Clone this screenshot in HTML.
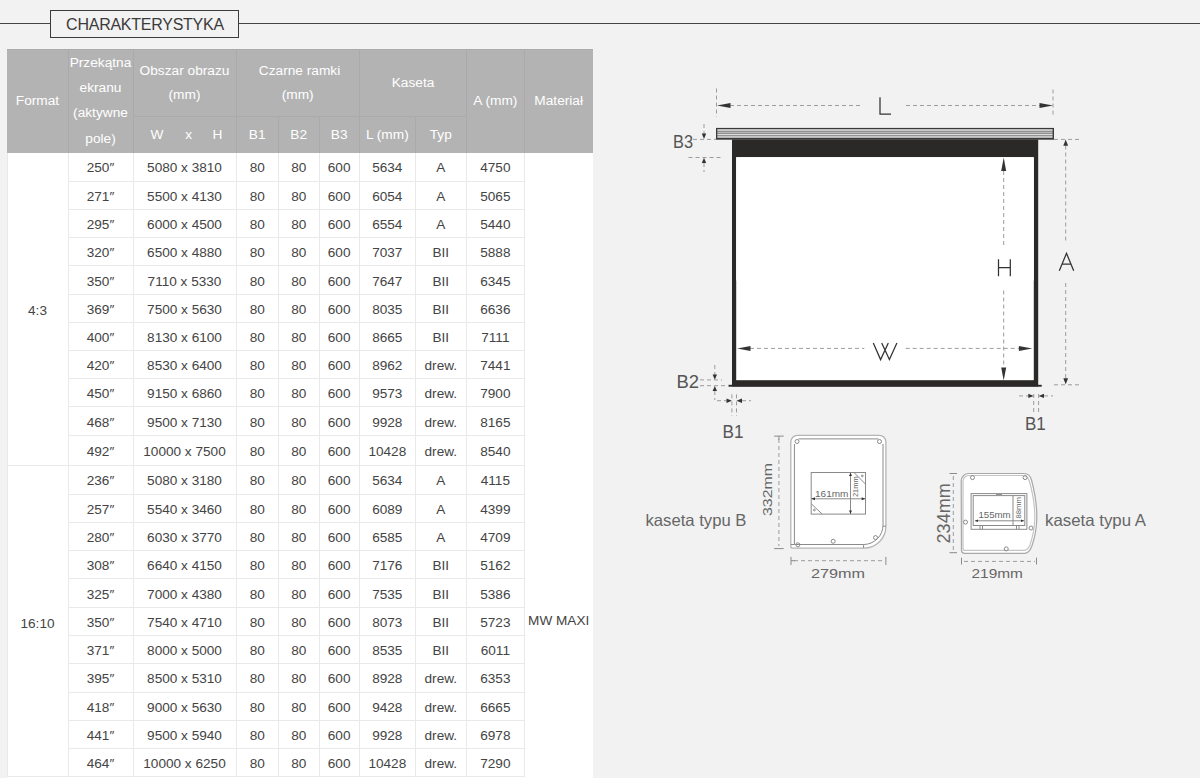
<!DOCTYPE html>
<html><head><meta charset="utf-8">
<style>
html,body{margin:0;padding:0;}
body{width:1200px;height:778px;background:#f2f2f2;position:relative;overflow:hidden;font-family:"Liberation Sans",sans-serif;}
.t,.ht{position:absolute;width:200px;text-align:center;white-space:nowrap;line-height:0;height:0;}
.t{font-size:13.6px;color:#444;}
.ht{font-size:13.7px;color:#fff;}
.t span,.ht span{}
.hl{position:absolute;height:1px;background:#e9e9e9;}
.vl{position:absolute;width:1px;background:#e9e9e9;}
.hvl{position:absolute;width:1px;background:#aaaaaa;}
.hhl{position:absolute;height:1px;background:#aaaaaa;}
#title{position:absolute;left:50px;top:10px;width:186.5px;height:25.5px;border:1.5px solid #3c3c3c;}
#tline{position:absolute;left:0;top:22.5px;width:1200px;height:1.3px;background:#444;}
#tt{position:absolute;left:50.5px;top:25px;width:189px;text-align:center;font-size:16px;color:#3b3b3b;line-height:0;letter-spacing:-0.25px;}
#thead{position:absolute;left:7px;top:49px;width:586px;height:103.5px;background:#b3b3b3;border-top:1px solid #ababab;box-sizing:border-box;}
#tbody{position:absolute;left:7px;top:152.5px;width:586px;height:625px;background:#fff;}
svg{position:absolute;left:0;top:0;}
</style></head><body>
<div id="tline"></div>
<div id="title" style="background:#f2f2f2"></div>
<div id="tt">CHARAKTERYSTYKA</div>
<div id="thead"></div>
<div id="tbody"></div>
<div class="hl" style="top:180.80px;left:68px;width:456.4px"></div>
<div class="hl" style="top:209.00px;left:68px;width:456.4px"></div>
<div class="hl" style="top:237.20px;left:68px;width:456.4px"></div>
<div class="hl" style="top:265.40px;left:68px;width:456.4px"></div>
<div class="hl" style="top:293.60px;left:68px;width:456.4px"></div>
<div class="hl" style="top:321.80px;left:68px;width:456.4px"></div>
<div class="hl" style="top:350.00px;left:68px;width:456.4px"></div>
<div class="hl" style="top:378.20px;left:68px;width:456.4px"></div>
<div class="hl" style="top:406.40px;left:68px;width:456.4px"></div>
<div class="hl" style="top:434.60px;left:68px;width:456.4px"></div>
<div class="hl" style="top:465.30px;left:7px;width:517.4px"></div>
<div class="hl" style="top:493.58px;left:68px;width:456.4px"></div>
<div class="hl" style="top:521.86px;left:68px;width:456.4px"></div>
<div class="hl" style="top:550.14px;left:68px;width:456.4px"></div>
<div class="hl" style="top:578.42px;left:68px;width:456.4px"></div>
<div class="hl" style="top:606.70px;left:68px;width:456.4px"></div>
<div class="hl" style="top:634.98px;left:68px;width:456.4px"></div>
<div class="hl" style="top:663.26px;left:68px;width:456.4px"></div>
<div class="hl" style="top:691.54px;left:68px;width:456.4px"></div>
<div class="hl" style="top:719.82px;left:68px;width:456.4px"></div>
<div class="hl" style="top:748.10px;left:68px;width:456.4px"></div>
<div class="hl" style="top:776.38px;left:7px;width:517.4px"></div>
<div class="vl" style="left:67.50px;top:152.5px;height:624.88px"></div>
<div class="vl" style="left:132.50px;top:152.5px;height:624.88px"></div>
<div class="vl" style="left:235.50px;top:152.5px;height:624.88px"></div>
<div class="vl" style="left:277.90px;top:152.5px;height:624.88px"></div>
<div class="vl" style="left:318.50px;top:152.5px;height:624.88px"></div>
<div class="vl" style="left:358.80px;top:152.5px;height:624.88px"></div>
<div class="vl" style="left:414.80px;top:152.5px;height:624.88px"></div>
<div class="vl" style="left:465.80px;top:152.5px;height:624.88px"></div>
<div class="vl" style="left:523.90px;top:152.5px;height:624.88px"></div>
<div class="vl" style="left:6.5px;top:152.5px;height:624.9px"></div>
<div class="hvl" style="left:67.50px;top:49px;height:103.5px"></div>
<div class="hvl" style="left:132.50px;top:49px;height:103.5px"></div>
<div class="hvl" style="left:235.50px;top:49px;height:103.5px"></div>
<div class="hvl" style="left:358.80px;top:49px;height:103.5px"></div>
<div class="hvl" style="left:465.80px;top:49px;height:103.5px"></div>
<div class="hvl" style="left:523.90px;top:49px;height:103.5px"></div>
<div class="hvl" style="left:277.90px;top:116px;height:36.5px"></div>
<div class="hvl" style="left:318.50px;top:116px;height:36.5px"></div>
<div class="hvl" style="left:414.80px;top:116px;height:36.5px"></div>
<div class="hhl" style="left:133px;top:115.5px;width:333.3px"></div>
<div class="ht" style="left:-62.50px;top:100.50px">Format</div>
<div class="ht" style="left:0.50px;top:62.50px">Przekątna</div>
<div class="ht" style="left:0.50px;top:87.90px">ekranu</div>
<div class="ht" style="left:0.50px;top:113.30px">(aktywne</div>
<div class="ht" style="left:0.50px;top:138.70px">pole)</div>
<div class="ht" style="left:84.50px;top:70.70px">Obszar obrazu</div>
<div class="ht" style="left:84.50px;top:95.20px">(mm)</div>
<div class="ht" style="left:57.00px;top:135.30px">W</div>
<div class="ht" style="left:88.70px;top:135.30px">x</div>
<div class="ht" style="left:117.50px;top:135.30px">H</div>
<div class="ht" style="left:199.50px;top:70.70px">Czarne ramki</div>
<div class="ht" style="left:197.70px;top:95.20px">(mm)</div>
<div class="ht" style="left:157.20px;top:135.30px">B1</div>
<div class="ht" style="left:198.70px;top:135.30px">B2</div>
<div class="ht" style="left:239.20px;top:135.30px">B3</div>
<div class="ht" style="left:313.00px;top:83.00px">Kaseta</div>
<div class="ht" style="left:287.30px;top:135.30px">L (mm)</div>
<div class="ht" style="left:340.80px;top:135.30px">Typ</div>
<div class="ht" style="left:395.35px;top:101.00px">A (mm)</div>
<div class="ht" style="left:458.70px;top:101.00px">Materiał</div>
<div class="t" style="left:0.50px;top:168.40px">250&#8243;</div>
<div class="t" style="left:84.50px;top:168.40px">5080 x 3810</div>
<div class="t" style="left:157.20px;top:168.40px">80</div>
<div class="t" style="left:198.70px;top:168.40px">80</div>
<div class="t" style="left:239.15px;top:168.40px">600</div>
<div class="t" style="left:287.30px;top:168.40px">5634</div>
<div class="t" style="left:340.80px;top:168.40px">A</div>
<div class="t" style="left:395.35px;top:168.40px">4750</div>
<div class="t" style="left:0.50px;top:196.90px">271&#8243;</div>
<div class="t" style="left:84.50px;top:196.90px">5500 x 4130</div>
<div class="t" style="left:157.20px;top:196.90px">80</div>
<div class="t" style="left:198.70px;top:196.90px">80</div>
<div class="t" style="left:239.15px;top:196.90px">600</div>
<div class="t" style="left:287.30px;top:196.90px">6054</div>
<div class="t" style="left:340.80px;top:196.90px">A</div>
<div class="t" style="left:395.35px;top:196.90px">5065</div>
<div class="t" style="left:0.50px;top:225.10px">295&#8243;</div>
<div class="t" style="left:84.50px;top:225.10px">6000 x 4500</div>
<div class="t" style="left:157.20px;top:225.10px">80</div>
<div class="t" style="left:198.70px;top:225.10px">80</div>
<div class="t" style="left:239.15px;top:225.10px">600</div>
<div class="t" style="left:287.30px;top:225.10px">6554</div>
<div class="t" style="left:340.80px;top:225.10px">A</div>
<div class="t" style="left:395.35px;top:225.10px">5440</div>
<div class="t" style="left:0.50px;top:253.30px">320&#8243;</div>
<div class="t" style="left:84.50px;top:253.30px">6500 x 4880</div>
<div class="t" style="left:157.20px;top:253.30px">80</div>
<div class="t" style="left:198.70px;top:253.30px">80</div>
<div class="t" style="left:239.15px;top:253.30px">600</div>
<div class="t" style="left:287.30px;top:253.30px">7037</div>
<div class="t" style="left:340.80px;top:253.30px">BII</div>
<div class="t" style="left:395.35px;top:253.30px">5888</div>
<div class="t" style="left:0.50px;top:281.50px">350&#8243;</div>
<div class="t" style="left:84.50px;top:281.50px">7110 x 5330</div>
<div class="t" style="left:157.20px;top:281.50px">80</div>
<div class="t" style="left:198.70px;top:281.50px">80</div>
<div class="t" style="left:239.15px;top:281.50px">600</div>
<div class="t" style="left:287.30px;top:281.50px">7647</div>
<div class="t" style="left:340.80px;top:281.50px">BII</div>
<div class="t" style="left:395.35px;top:281.50px">6345</div>
<div class="t" style="left:0.50px;top:309.70px">369&#8243;</div>
<div class="t" style="left:84.50px;top:309.70px">7500 x 5630</div>
<div class="t" style="left:157.20px;top:309.70px">80</div>
<div class="t" style="left:198.70px;top:309.70px">80</div>
<div class="t" style="left:239.15px;top:309.70px">600</div>
<div class="t" style="left:287.30px;top:309.70px">8035</div>
<div class="t" style="left:340.80px;top:309.70px">BII</div>
<div class="t" style="left:395.35px;top:309.70px">6636</div>
<div class="t" style="left:0.50px;top:337.90px">400&#8243;</div>
<div class="t" style="left:84.50px;top:337.90px">8130 x 6100</div>
<div class="t" style="left:157.20px;top:337.90px">80</div>
<div class="t" style="left:198.70px;top:337.90px">80</div>
<div class="t" style="left:239.15px;top:337.90px">600</div>
<div class="t" style="left:287.30px;top:337.90px">8665</div>
<div class="t" style="left:340.80px;top:337.90px">BII</div>
<div class="t" style="left:395.35px;top:337.90px">7111</div>
<div class="t" style="left:0.50px;top:366.10px">420&#8243;</div>
<div class="t" style="left:84.50px;top:366.10px">8530 x 6400</div>
<div class="t" style="left:157.20px;top:366.10px">80</div>
<div class="t" style="left:198.70px;top:366.10px">80</div>
<div class="t" style="left:239.15px;top:366.10px">600</div>
<div class="t" style="left:287.30px;top:366.10px">8962</div>
<div class="t" style="left:340.80px;top:366.10px">drew.</div>
<div class="t" style="left:395.35px;top:366.10px">7441</div>
<div class="t" style="left:0.50px;top:394.30px">450&#8243;</div>
<div class="t" style="left:84.50px;top:394.30px">9150 x 6860</div>
<div class="t" style="left:157.20px;top:394.30px">80</div>
<div class="t" style="left:198.70px;top:394.30px">80</div>
<div class="t" style="left:239.15px;top:394.30px">600</div>
<div class="t" style="left:287.30px;top:394.30px">9573</div>
<div class="t" style="left:340.80px;top:394.30px">drew.</div>
<div class="t" style="left:395.35px;top:394.30px">7900</div>
<div class="t" style="left:0.50px;top:422.50px">468&#8243;</div>
<div class="t" style="left:84.50px;top:422.50px">9500 x 7130</div>
<div class="t" style="left:157.20px;top:422.50px">80</div>
<div class="t" style="left:198.70px;top:422.50px">80</div>
<div class="t" style="left:239.15px;top:422.50px">600</div>
<div class="t" style="left:287.30px;top:422.50px">9928</div>
<div class="t" style="left:340.80px;top:422.50px">drew.</div>
<div class="t" style="left:395.35px;top:422.50px">8165</div>
<div class="t" style="left:0.50px;top:451.95px">492&#8243;</div>
<div class="t" style="left:84.50px;top:451.95px">10000 x 7500</div>
<div class="t" style="left:157.20px;top:451.95px">80</div>
<div class="t" style="left:198.70px;top:451.95px">80</div>
<div class="t" style="left:239.15px;top:451.95px">600</div>
<div class="t" style="left:287.30px;top:451.95px">10428</div>
<div class="t" style="left:340.80px;top:451.95px">drew.</div>
<div class="t" style="left:395.35px;top:451.95px">8540</div>
<div class="t" style="left:0.50px;top:481.44px">236&#8243;</div>
<div class="t" style="left:84.50px;top:481.44px">5080 x 3180</div>
<div class="t" style="left:157.20px;top:481.44px">80</div>
<div class="t" style="left:198.70px;top:481.44px">80</div>
<div class="t" style="left:239.15px;top:481.44px">600</div>
<div class="t" style="left:287.30px;top:481.44px">5634</div>
<div class="t" style="left:340.80px;top:481.44px">A</div>
<div class="t" style="left:395.35px;top:481.44px">4115</div>
<div class="t" style="left:0.50px;top:509.72px">257&#8243;</div>
<div class="t" style="left:84.50px;top:509.72px">5540 x 3460</div>
<div class="t" style="left:157.20px;top:509.72px">80</div>
<div class="t" style="left:198.70px;top:509.72px">80</div>
<div class="t" style="left:239.15px;top:509.72px">600</div>
<div class="t" style="left:287.30px;top:509.72px">6089</div>
<div class="t" style="left:340.80px;top:509.72px">A</div>
<div class="t" style="left:395.35px;top:509.72px">4399</div>
<div class="t" style="left:0.50px;top:538.00px">280&#8243;</div>
<div class="t" style="left:84.50px;top:538.00px">6030 x 3770</div>
<div class="t" style="left:157.20px;top:538.00px">80</div>
<div class="t" style="left:198.70px;top:538.00px">80</div>
<div class="t" style="left:239.15px;top:538.00px">600</div>
<div class="t" style="left:287.30px;top:538.00px">6585</div>
<div class="t" style="left:340.80px;top:538.00px">A</div>
<div class="t" style="left:395.35px;top:538.00px">4709</div>
<div class="t" style="left:0.50px;top:566.28px">308&#8243;</div>
<div class="t" style="left:84.50px;top:566.28px">6640 x 4150</div>
<div class="t" style="left:157.20px;top:566.28px">80</div>
<div class="t" style="left:198.70px;top:566.28px">80</div>
<div class="t" style="left:239.15px;top:566.28px">600</div>
<div class="t" style="left:287.30px;top:566.28px">7176</div>
<div class="t" style="left:340.80px;top:566.28px">BII</div>
<div class="t" style="left:395.35px;top:566.28px">5162</div>
<div class="t" style="left:0.50px;top:594.56px">325&#8243;</div>
<div class="t" style="left:84.50px;top:594.56px">7000 x 4380</div>
<div class="t" style="left:157.20px;top:594.56px">80</div>
<div class="t" style="left:198.70px;top:594.56px">80</div>
<div class="t" style="left:239.15px;top:594.56px">600</div>
<div class="t" style="left:287.30px;top:594.56px">7535</div>
<div class="t" style="left:340.80px;top:594.56px">BII</div>
<div class="t" style="left:395.35px;top:594.56px">5386</div>
<div class="t" style="left:0.50px;top:622.84px">350&#8243;</div>
<div class="t" style="left:84.50px;top:622.84px">7540 x 4710</div>
<div class="t" style="left:157.20px;top:622.84px">80</div>
<div class="t" style="left:198.70px;top:622.84px">80</div>
<div class="t" style="left:239.15px;top:622.84px">600</div>
<div class="t" style="left:287.30px;top:622.84px">8073</div>
<div class="t" style="left:340.80px;top:622.84px">BII</div>
<div class="t" style="left:395.35px;top:622.84px">5723</div>
<div class="t" style="left:0.50px;top:651.12px">371&#8243;</div>
<div class="t" style="left:84.50px;top:651.12px">8000 x 5000</div>
<div class="t" style="left:157.20px;top:651.12px">80</div>
<div class="t" style="left:198.70px;top:651.12px">80</div>
<div class="t" style="left:239.15px;top:651.12px">600</div>
<div class="t" style="left:287.30px;top:651.12px">8535</div>
<div class="t" style="left:340.80px;top:651.12px">BII</div>
<div class="t" style="left:395.35px;top:651.12px">6011</div>
<div class="t" style="left:0.50px;top:679.40px">395&#8243;</div>
<div class="t" style="left:84.50px;top:679.40px">8500 x 5310</div>
<div class="t" style="left:157.20px;top:679.40px">80</div>
<div class="t" style="left:198.70px;top:679.40px">80</div>
<div class="t" style="left:239.15px;top:679.40px">600</div>
<div class="t" style="left:287.30px;top:679.40px">8928</div>
<div class="t" style="left:340.80px;top:679.40px">drew.</div>
<div class="t" style="left:395.35px;top:679.40px">6353</div>
<div class="t" style="left:0.50px;top:707.68px">418&#8243;</div>
<div class="t" style="left:84.50px;top:707.68px">9000 x 5630</div>
<div class="t" style="left:157.20px;top:707.68px">80</div>
<div class="t" style="left:198.70px;top:707.68px">80</div>
<div class="t" style="left:239.15px;top:707.68px">600</div>
<div class="t" style="left:287.30px;top:707.68px">9428</div>
<div class="t" style="left:340.80px;top:707.68px">drew.</div>
<div class="t" style="left:395.35px;top:707.68px">6665</div>
<div class="t" style="left:0.50px;top:735.96px">441&#8243;</div>
<div class="t" style="left:84.50px;top:735.96px">9500 x 5940</div>
<div class="t" style="left:157.20px;top:735.96px">80</div>
<div class="t" style="left:198.70px;top:735.96px">80</div>
<div class="t" style="left:239.15px;top:735.96px">600</div>
<div class="t" style="left:287.30px;top:735.96px">9928</div>
<div class="t" style="left:340.80px;top:735.96px">drew.</div>
<div class="t" style="left:395.35px;top:735.96px">6978</div>
<div class="t" style="left:0.50px;top:764.24px">464&#8243;</div>
<div class="t" style="left:84.50px;top:764.24px">10000 x 6250</div>
<div class="t" style="left:157.20px;top:764.24px">80</div>
<div class="t" style="left:198.70px;top:764.24px">80</div>
<div class="t" style="left:239.15px;top:764.24px">600</div>
<div class="t" style="left:287.30px;top:764.24px">10428</div>
<div class="t" style="left:340.80px;top:764.24px">drew.</div>
<div class="t" style="left:395.35px;top:764.24px">7290</div>
<div class="t" style="left:-62.5px;top:311.2px">4:3</div>
<div class="t" style="left:-62.5px;top:623.6px">16:10</div>
<div class="t" style="left:458.7px;top:621px">MW MAXI</div>
<svg width="1200" height="778" viewBox="0 0 1200 778">
<defs>
<style>
.d{stroke:#9c9c9c;stroke-width:1;stroke-dasharray:4 3;fill:none}
.ar{fill:#333}
.lt{stroke:#333;stroke-width:1.25;fill:none;stroke-linecap:butt}
.bl{font-family:"Liberation Sans",sans-serif;fill:#555}
.cs{stroke:#8a8a8a;stroke-width:1;fill:none}
.ct{font-family:"Liberation Sans",sans-serif;fill:#666}
</style>
</defs>
<!-- L dimension -->
<line class="d" x1="716.5" y1="88.5" x2="716.5" y2="117"/>
<line class="d" x1="1053" y1="89.5" x2="1053" y2="116"/>
<line class="d" x1="730" y1="105.5" x2="862" y2="105.5"/>
<line class="d" x1="906" y1="105.5" x2="1040" y2="105.5"/>
<polygon class="ar" points="717,105.5 730.5,103 730.5,108"/>
<polygon class="ar" points="1053,105.5 1039.5,103 1039.5,108"/>
<path class="lt" d="M880,97.3 V114 H891"/>
<!-- casing -->
<rect x="716" y="127.9" width="338" height="11.8" fill="#3a3a3a"/>
<rect x="717.3" y="129.1" width="335.3" height="1.9" fill="#cacaca"/>
<rect x="717.3" y="131" width="335.3" height="0.8" fill="#9a9a9a"/>
<rect x="717.3" y="131.8" width="335.3" height="1.2" fill="#b8b8b8"/>
<rect x="717.3" y="133" width="335.3" height="0.8" fill="#8c8c8c"/>
<rect x="717.3" y="133.8" width="335.3" height="1.2" fill="#dedede"/>
<rect x="717.3" y="135" width="335.3" height="0.8" fill="#9a9a9a"/>
<rect x="717.3" y="135.8" width="335.3" height="2.1" fill="#c6c6c6"/>
<!-- frame -->
<rect x="732" y="139.5" width="306.2" height="247" fill="#2b2828"/>
<rect x="736.2" y="157.2" width="297.6" height="123.3" fill="#fff"/>
<rect x="736.2" y="157.2" width="297.6" height="223" fill="#fff"/>
<rect x="728.5" y="384.8" width="313.2" height="1.9" fill="#2b2828"/>
<!-- B3 -->
<line class="d" x1="693" y1="139.4" x2="716" y2="139.4"/>
<line class="d" x1="688.5" y1="157.5" x2="722" y2="157.5"/>
<line class="d" x1="704" y1="124" x2="704" y2="134"/>
<polygon class="ar" points="704,139 701.8,133.5 706.2,133.5"/>
<polygon class="ar" points="704,157.8 701.8,163 706.2,163"/>
<line class="d" x1="704" y1="163" x2="704" y2="172"/>
<text class="bl" x="673" y="148" font-size="17.5" textLength="20" lengthAdjust="spacingAndGlyphs">B3</text>
<!-- B2 -->
<line class="d" x1="700" y1="379.9" x2="722" y2="379.9"/>
<line class="d" x1="700" y1="385.7" x2="728.5" y2="385.7"/>
<line class="d" x1="714.8" y1="365" x2="714.8" y2="375"/>
<polygon class="ar" points="714.8,379.7 712.6,374.5 717,374.5"/>
<polygon class="ar" points="714.8,386 712.6,391 717,391"/>
<line class="d" x1="714.8" y1="391" x2="714.8" y2="400"/>
<text class="bl" x="676.5" y="388.3" font-size="19" textLength="22.6" lengthAdjust="spacingAndGlyphs">B2</text>
<!-- B1 left -->
<line class="d" x1="731.9" y1="394.4" x2="731.9" y2="416"/>
<line class="d" x1="736.5" y1="394.4" x2="736.5" y2="416"/>
<line class="d" x1="717" y1="400.7" x2="726.5" y2="400.7"/>
<line class="d" x1="742" y1="400.7" x2="751" y2="400.7"/>
<polygon class="ar" points="731.9,400.7 726.5,398.5 726.5,402.9"/>
<polygon class="ar" points="736.5,400.7 742,398.5 742,402.9"/>
<text class="bl" x="722.5" y="437.8" font-size="19" textLength="21" lengthAdjust="spacingAndGlyphs">B1</text>
<!-- B1 right -->
<line class="d" x1="1033.7" y1="394" x2="1033.7" y2="413"/>
<line class="d" x1="1038.6" y1="394" x2="1038.6" y2="413"/>
<line class="d" x1="1019" y1="395.9" x2="1028.5" y2="395.9"/>
<line class="d" x1="1044" y1="395.9" x2="1053" y2="395.9"/>
<polygon class="ar" points="1033.7,395.9 1028.3,393.7 1028.3,398.1"/>
<polygon class="ar" points="1038.6,395.9 1044,393.7 1044,398.1"/>
<text class="bl" x="1025" y="430.3" font-size="19" textLength="20.8" lengthAdjust="spacingAndGlyphs">B1</text>
<!-- H -->
<line class="d" x1="1003.7" y1="171" x2="1003.7" y2="246"/>
<line class="d" x1="1003.7" y1="290.5" x2="1003.7" y2="367.5"/>
<polygon class="ar" points="1003.7,157.5 1001.2,171 1006.2,171"/>
<polygon class="ar" points="1003.7,380.5 1001.2,367.5 1006.2,367.5"/>
<path class="lt" d="M998.5,259.2 V276.3 M1010.3,259.2 V276.3 M998.5,267.5 H1010.3"/>
<!-- A -->
<line class="d" x1="1054" y1="139.4" x2="1080" y2="139.4"/>
<line class="d" x1="1054" y1="384.8" x2="1080" y2="384.8"/>
<line class="d" x1="1065.7" y1="145.5" x2="1065.7" y2="241"/>
<line class="d" x1="1065.7" y1="283" x2="1065.7" y2="378.5"/>
<polygon class="ar" points="1065.7,139.6 1063.3,145.8 1068.1,145.8"/>
<polygon class="ar" points="1065.7,384.3 1063.3,378.2 1068.1,378.2"/>
<path class="lt" d="M1059.3,270.8 L1066.5,253.3 L1073.7,270.8 M1061.9,264.2 H1071.1"/>
<!-- W -->
<line class="d" x1="750" y1="348.4" x2="864.3" y2="348.4"/>
<line class="d" x1="905.7" y1="348.4" x2="1019" y2="348.4"/>
<polygon class="ar" points="737.2,348.4 750.5,345.9 750.5,350.9"/>
<polygon class="ar" points="1032.2,348.4 1018.9,345.9 1018.9,350.9"/>
<path class="lt" d="M873.3,342.9 L880.6,359.6 L888.3,342.9 M881.7,342.9 L889.4,359.6 L896.9,342.9"/>
<!-- cassette B -->
<path class="cs" style="fill:#fff;stroke:#b5b5b5;stroke-width:1.3" d="M790.8,442 A6.7,6.7 0 0 1 797.5,435.3 H879.4 A6.5,6.5 0 0 1 885.9,441.8 V526.2 A22,22 0 0 1 863.9,548.2 H792.8 A2,2 0 0 1 790.8,546.2 Z"/>
<path class="cs" d="M790.8,544.5 H794.4 V444 M794.4,544.5 H863.6 A19.4,19.4 0 0 0 883,525.1 V444 M798.5,438.9 H878.5 M883,526.2 H885.9 M863.6,544.5 V548.2"/>
<circle class="cs" cx="797" cy="441.5" r="2"/>
<circle class="cs" cx="879.5" cy="441.5" r="2"/>
<circle class="cs" cx="797.9" cy="544.8" r="2"/>
<circle class="cs" cx="833.2" cy="541.3" r="2"/>
<circle class="cs" cx="875.5" cy="537.6" r="2"/>
<rect class="cs" x="811.2" y="472.5" width="54.3" height="41.6"/>
<path class="cs" d="M811.2,498.8 H865.5 M850.5,472.5 V514.1 M854,472.5 L865.5,484.1 M811.2,503.7 L822.2,514.1"/>
<polygon class="ar" points="811.5,498.8 815,497.3 815,500.3"/>
<polygon class="ar" points="865.2,498.8 861.7,497.3 861.7,500.3"/>
<polygon class="ar" points="850.5,472.8 849,476 852,476"/>
<polygon class="ar" points="850.5,513.8 849,510.6 852,510.6"/>
<circle class="cs" cx="862.3" cy="475.9" r="0.9"/>
<circle class="cs" cx="814.4" cy="510" r="0.9"/>
<text class="ct" x="815" y="497" font-size="9.5" textLength="33.4" lengthAdjust="spacingAndGlyphs">161mm</text>
<text class="ct" transform="translate(858.3,497) rotate(-90)" font-size="7" textLength="20.6" lengthAdjust="spacingAndGlyphs">21mm</text>
<line class="d" x1="778.9" y1="439" x2="778.9" y2="546"/>
<line class="cs" x1="774.1" y1="436.1" x2="783.7" y2="436.1"/>
<line class="cs" x1="774.1" y1="548.6" x2="783.7" y2="548.6"/>
<line class="cs" x1="778.9" y1="436.1" x2="778.9" y2="440"/>
<text class="ct" transform="translate(771.9,516) rotate(-90)" font-size="12.2" textLength="53" lengthAdjust="spacingAndGlyphs">332mm</text>
<line class="d" x1="794" y1="560.7" x2="884" y2="560.7"/>
<line class="cs" x1="791" y1="556.9" x2="791" y2="565"/>
<line class="cs" x1="885.9" y1="556.9" x2="885.9" y2="565"/>
<line class="cs" x1="791" y1="560.7" x2="795" y2="560.7"/>
<text class="ct" x="811" y="577.8" font-size="12.8" textLength="54" lengthAdjust="spacingAndGlyphs">279mm</text>
<text class="ct" x="645.5" y="526" font-size="16.5" textLength="101" lengthAdjust="spacingAndGlyphs">kaseta typu B</text>
<!-- cassette A -->
<path class="cs" style="fill:#fff;stroke:#a8a8a8;stroke-width:1.2" d="M961.2,481.1 A7.6,7.6 0 0 1 968.8,473.5 H1023.8 C1028,473.5 1030.5,476 1031.5,480 C1035,493 1037,506 1036.8,519 C1036.5,530 1034,540 1031.8,546.2 C1030,551 1027,553.3 1024.5,553.3 H964.5 A3,3 0 0 1 961.5,550.3 Z"/>
<path class="cs" style="stroke:#c4c4c4;stroke-width:1.2" d="M963,482 A6,6 0 0 1 969,475.5 H1023 C1026.5,475.5 1028.5,478 1029.5,481.5 C1033,494 1035,507 1034.8,519 C1034.5,530 1032,539 1030,545 C1028.5,549 1026,550.4 1023.5,550.4 H965 A2,2 0 0 1 963,548.4 Z"/>
<circle class="cs" cx="972.5" cy="477.6" r="2"/>
<circle class="cs" cx="1025.1" cy="477.6" r="2"/>
<circle class="cs" cx="965.5" cy="522.1" r="2"/>
<circle class="cs" cx="1031" cy="528" r="2"/>
<circle class="cs" cx="1006.25" cy="548.9" r="2"/>
<rect class="cs" x="971.1" y="493.6" width="55.8" height="35.7"/>
<rect class="cs" x="973.2" y="495.6" width="51.6" height="29.9"/>
<path class="cs" d="M975,520.8 H1024 M1013,496 V525.5 M980,525.5 V529.3 M982.5,525.5 V529.3 M1016.5,525.5 V529.3 M1019,525.5 V529.3 M996,494.6 H1002"/>
<polygon class="ar" points="975,520.8 978,519.5 978,522.1"/>
<polygon class="ar" points="1024,520.8 1021,519.5 1021,522.1"/>
<text class="ct" x="978.4" y="517.6" font-size="9" textLength="32.3" lengthAdjust="spacingAndGlyphs">155mm</text>
<text class="ct" transform="translate(1020.8,518.5) rotate(-90)" font-size="7.5" textLength="21.5" lengthAdjust="spacingAndGlyphs">88mm</text>
<line class="d" x1="953.3" y1="476" x2="953.3" y2="550"/>
<line class="cs" x1="949.5" y1="473.5" x2="957" y2="473.5"/>
<line class="cs" x1="949.5" y1="552.7" x2="957" y2="552.7"/>
<text class="ct" transform="translate(950.2,543.4) rotate(-90)" font-size="18.6" textLength="60.1" lengthAdjust="spacingAndGlyphs">234mm</text>
<line class="d" x1="964" y1="561.4" x2="1035" y2="561.4"/>
<line class="cs" x1="961.5" y1="557.7" x2="961.5" y2="564.5"/>
<line class="cs" x1="1036.5" y1="557.7" x2="1036.5" y2="564.5"/>
<text class="ct" x="971.5" y="578" font-size="13" textLength="51.4" lengthAdjust="spacingAndGlyphs">219mm</text>
<text class="ct" x="1045" y="526" font-size="16.5" textLength="101" lengthAdjust="spacingAndGlyphs">kaseta typu A</text>
</svg>

</body></html>
